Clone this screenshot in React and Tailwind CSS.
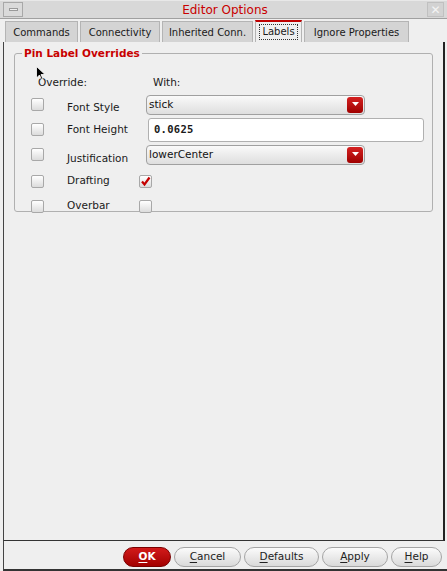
import React from "react";

const F = { fontFamily: '"DejaVu Sans", sans-serif' };

function Check({ checked }) {
  return (
    <div className="w-[13px] h-[13px] border border-[#a8a8a8] rounded-[2px] bg-gradient-to-b from-[#ffffff] to-[#dcdcdc] flex items-center justify-center">
      {checked && (
        <svg width="11" height="11" viewBox="0 0 11 11">
          <path d="M2 5.5 L4.5 8.5 L9.5 1.5" stroke="#c40000" strokeWidth="2.2" fill="none" />
        </svg>
      )}
    </div>
  );
}

function Select({ value }) {
  return (
    <div className="w-[219px] h-[20px] border border-[#a0a0a0] rounded-[4px] bg-gradient-to-b from-[#fafafa] to-[#dedede] flex items-center justify-between pl-[2px] pr-[1px]">
      <span className="text-[10.5px] text-[#111]">{value}</span>
      <div className="w-[16px] h-[16px] rounded-[3px] bg-gradient-to-b from-[#d42020] to-[#a00000] flex items-center justify-center">
        <svg width="7" height="5" viewBox="0 0 7 5">
          <path d="M0 0 L7 0 L3.5 4 Z" fill="#fff" />
        </svg>
      </div>
    </div>
  );
}

function Btn({ label, w, primary }) {
  const first = label.slice(0, 1);
  const rest = label.slice(1);
  return (
    <div
      className={
        "h-[20px] rounded-full flex items-center justify-center text-[10.5px] " +
        (primary
          ? "bg-gradient-to-b from-[#d21a1a] to-[#a30000] border border-[#7a0000] text-white font-bold"
          : "bg-gradient-to-b from-[#fbfbfb] to-[#dadada] border border-[#a5a5a5] text-[#222]")
      }
      style={{ width: w }}
    >
      <span className="underline underline-offset-2">{first}</span>
      <span>{rest}</span>
    </div>
  );
}

export default function App() {
  return (
    <div className="w-[447px] h-[571px] bg-[#efefef] relative overflow-hidden text-[#1a1a1a]" style={F}>
      {/* title bar */}
      <div className="h-[19px] bg-[#d8d8d8] border-t border-[#e8e8e8] border-b border-b-[#a0a0a0] flex items-center px-[3px]">
        <div className="w-[20px] h-[15px] border border-[#a8a8a8] bg-[#dadada] flex items-center justify-center">
          <div className="w-[9px] h-[3px] border border-[#9a9a9a] bg-[#eee]" />
        </div>
        <div className="flex-1 text-center text-[12px] text-[#c80000] leading-none">Editor Options</div>
        <div className="w-[17px] h-[15px] border border-[#c0c0c0] bg-[#d2d2d2] flex items-center justify-center text-[#f4f4f4] text-[12px] leading-none">✕</div>
      </div>

      {/* tabs */}
      <div className="flex items-end pl-[5px] pt-[2px] h-[23px] gap-[2px] text-[10px]">
        <div className="h-[21px] w-[73px] bg-[#d4d4d4] border border-[#b4b4b4] border-b-0 flex items-center justify-center">Commands</div>
        <div className="h-[21px] w-[80px] bg-[#d4d4d4] border border-[#b4b4b4] border-b-0 flex items-center justify-center">Connectivity</div>
        <div className="h-[21px] w-[91px] bg-[#d4d4d4] border border-[#b4b4b4] border-b-0 flex items-center justify-center">Inherited Conn.</div>
        <div className="h-[22px] w-[47px] bg-[#efefef] border border-[#b4b4b4] border-t-2 border-t-[#c00000] border-b-0 flex items-center justify-center">
          <span className="border border-dotted border-[#333] px-[2px] leading-[14px]">Labels</span>
        </div>
        <div className="h-[21px] w-[105px] bg-[#d4d4d4] border border-[#b4b4b4] border-b-0 flex items-center justify-center">Ignore Properties</div>
      </div>

      {/* content panel */}
      <div className="ml-[3px] mr-[2px] h-[499px] border-l border-[#444] border-r-2 border-r-[#222] border-b border-b-[#333] bg-[#efefef] pt-[11px] px-[10px]">
        <div className="relative border border-[#b0b0b0] rounded-[3px] h-[159px] text-[10.5px]">
          <div className="absolute -top-[9px] left-[7px] px-[2px] bg-[#efefef] text-[#c80000] font-bold text-[10.5px] leading-[16px]">
            Pin Label Overrides
          </div>
          <div className="flex pt-[21px] pl-[23px]">
            <span className="w-[115px]">Override:</span>
            <span>With:</span>
          </div>
          <div className="flex items-center mt-[4px] h-[20px] pl-[16px]">
            <Check />
            <span className="ml-[23px] w-[79px] mt-[6px]">Font Style</span>
            <Select value="stick" />
          </div>
          <div className="flex items-center mt-[3px] h-[24px] pl-[16px]">
            <Check />
            <span className="ml-[23px] w-[81px]">Font Height</span>
            <div className="w-[276px] h-[24px] bg-white border border-[#b0b0b0] rounded-[3px] flex items-center pl-[5px]">
              <span className="text-[10.5px] font-bold tracking-[0.3px]" style={{ fontFamily: '"DejaVu Sans Mono", monospace' }}>0.0625</span>
            </div>
          </div>
          <div className="flex items-center mt-[3px] h-[20px] pl-[16px]">
            <Check />
            <span className="ml-[23px] w-[79px] mt-[8px]">Justification</span>
            <Select value="lowerCenter" />
          </div>
          <div className="flex items-center mt-[8px] h-[17px] pl-[16px]">
            <Check />
            <span className="ml-[23px] w-[72px]">Drafting</span>
            <Check checked />
          </div>
          <div className="flex items-center mt-[8px] h-[17px] pl-[16px]">
            <Check />
            <span className="ml-[23px] w-[72px]">Overbar</span>
            <Check />
          </div>
        </div>
      </div>

      {/* bottom buttons */}
      <div className="flex justify-end gap-[3px] pr-[5px] pt-[6px] h-[30px] border-l border-[#444] ml-[3px] border-b-2 border-b-[#333]">
        <Btn label="OK" w={48} primary />
        <Btn label="Cancel" w={67} />
        <Btn label="Defaults" w={75} />
        <Btn label="Apply" w={66} />
        <Btn label="Help" w={51} />
      </div>

      {/* mouse cursor */}
      <svg className="absolute left-[36px] top-[66px]" width="10" height="16" viewBox="0 0 10 16">
        <path d="M0.5 0.5 L0.5 12 L3.5 9 L5.5 13.5 L7 13 L5 8.5 L9 8.5 Z" fill="#000" stroke="#fff" strokeWidth="0.8" />
      </svg>
    </div>
  );
}
